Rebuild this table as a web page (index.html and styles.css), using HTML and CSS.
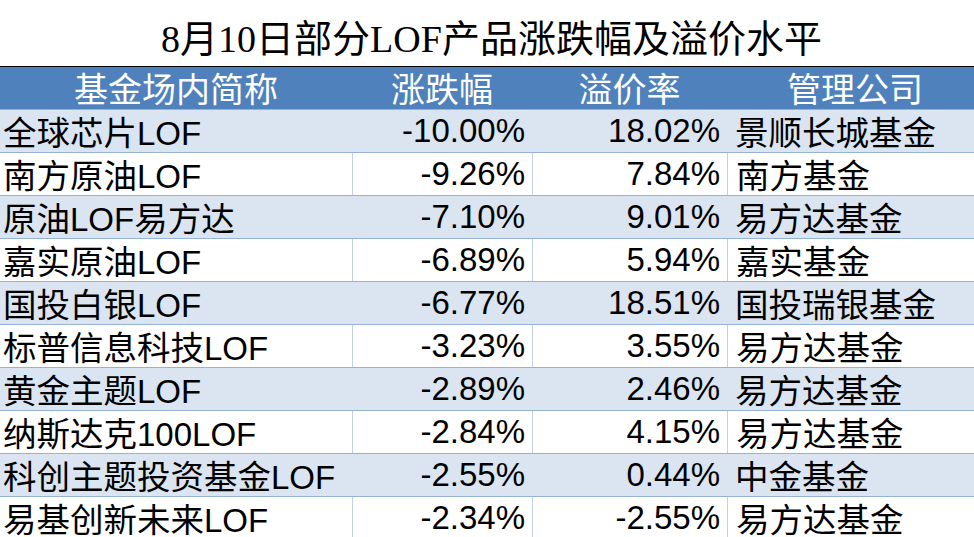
FILE: index.html
```html
<!DOCTYPE html>
<html lang="zh-CN">
<head>
<meta charset="utf-8">
<title>8月10日部分LOF产品涨跌幅及溢价水平</title>
<link rel="stylesheet" href="styles.css">
</head>
<body>
<div class="page">
  <h1 class="title">8<span class="tc">月</span>10<span class="tc">日部分</span>LOF<span class="tc">产品涨跌幅及溢价水平</span></h1>
  <div class="table">
    <div class="row head">
      <div class="cell center"><span class="c">基金场内简称</span></div>
      <div class="cell center"><span class="c">涨跌幅</span></div>
      <div class="cell center"><span class="c">溢价率</span></div>
      <div class="cell center"><span class="c">管理公司</span></div>
    </div>
    <div class="row shade">
      <div class="cell name"><span class="c">全球芯片</span>LOF</div>
      <div class="cell num">-10.00%</div>
      <div class="cell num">18.02%</div>
      <div class="cell co"><span class="c">景顺长城基金</span></div>
    </div>
    <div class="row plain">
      <div class="cell name"><span class="c">南方原油</span>LOF</div>
      <div class="cell num">-9.26%</div>
      <div class="cell num">7.84%</div>
      <div class="cell co"><span class="c">南方基金</span></div>
    </div>
    <div class="row shade">
      <div class="cell name"><span class="c">原油</span>LOF<span class="c">易方达</span></div>
      <div class="cell num">-7.10%</div>
      <div class="cell num">9.01%</div>
      <div class="cell co"><span class="c">易方达基金</span></div>
    </div>
    <div class="row plain">
      <div class="cell name"><span class="c">嘉实原油</span>LOF</div>
      <div class="cell num">-6.89%</div>
      <div class="cell num">5.94%</div>
      <div class="cell co"><span class="c">嘉实基金</span></div>
    </div>
    <div class="row shade">
      <div class="cell name"><span class="c">国投白银</span>LOF</div>
      <div class="cell num">-6.77%</div>
      <div class="cell num">18.51%</div>
      <div class="cell co"><span class="c">国投瑞银基金</span></div>
    </div>
    <div class="row plain">
      <div class="cell name"><span class="c">标普信息科技</span>LOF</div>
      <div class="cell num">-3.23%</div>
      <div class="cell num">3.55%</div>
      <div class="cell co"><span class="c">易方达基金</span></div>
    </div>
    <div class="row shade">
      <div class="cell name"><span class="c">黄金主题</span>LOF</div>
      <div class="cell num">-2.89%</div>
      <div class="cell num">2.46%</div>
      <div class="cell co"><span class="c">易方达基金</span></div>
    </div>
    <div class="row plain">
      <div class="cell name"><span class="c">纳斯达克</span>100LOF</div>
      <div class="cell num">-2.84%</div>
      <div class="cell num">4.15%</div>
      <div class="cell co"><span class="c">易方达基金</span></div>
    </div>
    <div class="row shade">
      <div class="cell name"><span class="c">科创主题投资基金</span>LOF</div>
      <div class="cell num">-2.55%</div>
      <div class="cell num">0.44%</div>
      <div class="cell co"><span class="c">中金基金</span></div>
    </div>
    <div class="row plain">
      <div class="cell name"><span class="c">易基创新未来</span>LOF</div>
      <div class="cell num">-2.34%</div>
      <div class="cell num">-2.55%</div>
      <div class="cell co"><span class="c">易方达基金</span></div>
    </div>
  </div>
</div>
</body>
</html>
```

FILE: styles.css
```css
html, body {
  margin: 0;
  padding: 0;
  background: #ffffff;
}
body {
  width: 974px;
  height: 537px;
  overflow: hidden;
}
.page {
  width: 983px;
}
.title {
  margin: 0;
  height: 66px;
  line-height: 72px;
  text-align: center;
  font-family: "Liberation Serif", "Noto Sans CJK SC", serif;
  font-size: 38px;
  font-weight: normal;
  color: #000000;
  white-space: nowrap;
}
.title .tc {
  font-family: "Noto Sans CJK SC", sans-serif;
}
.table {
  border-top: 1px solid #000000;
}
.row {
  display: grid;
  grid-template-columns: 352px 180px 195px 256px;
  height: 43px;
  border-bottom: 1px solid #95b3d7;
  box-sizing: border-box;
}
.head {
  background: #4f81bd;
  color: #ffffff;
}
.shade {
  background: #dbe5f1;
}
.plain {
  background: #ffffff;
}
.plain .cell + .cell {
  border-left: 1px solid #c3d0e3;
}
.cell {
  box-sizing: border-box;
  font-family: "Liberation Sans", "Noto Sans CJK SC", sans-serif;
  font-size: 33px;
  line-height: 42px;
  height: 42px;
  white-space: nowrap;
  color: #000000;
}
.head .cell {
  color: #ffffff;
}
.c {
  font-family: "Noto Sans CJK SC", sans-serif;
  font-size: 33.5px;
  line-height: 42px;
}
.head .c {
  font-size: 34px;
}
.center {
  text-align: center;
}
.name {
  padding-left: 3px;
}
.num {
  text-align: right;
  padding-right: 7px;
}
.co {
  padding-left: 8px;
}
```
